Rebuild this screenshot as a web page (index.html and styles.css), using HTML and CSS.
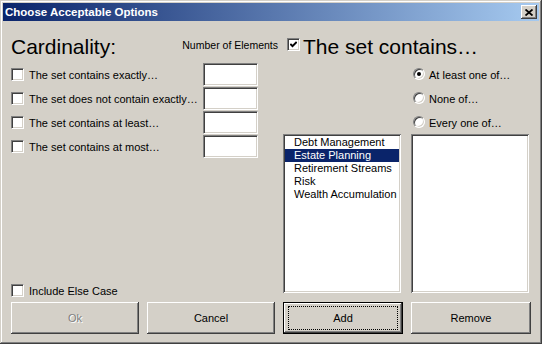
FILE: index.html
```html
<!DOCTYPE html>
<html lang="en">
<head>
  <meta charset="UTF-8">
  <title>Choose Acceptable Options</title>
  <link rel="stylesheet" href="styles.css">
</head>
<body>

  <div class="window">
    <div class="titlebar">
      <span class="title">Choose Acceptable Options</span>
      <span class="close">
        <svg width="8" height="7" viewBox="0 0 8 7">
          <path d="M0.5 0.5 L7.5 6.5 M7.5 0.5 L0.5 6.5" stroke="#000" stroke-width="1.8" fill="none"/>
        </svg>
      </span>
    </div>

    <div class="dialog">
      <div class="main">
        <!-- cardinality -->
        <div class="left">
          <div class="head">
            <span class="big">Cardinality:</span>
            <span class="small">Number of Elements</span>
          </div>
          <div class="opt-row"><span class="check"></span><span class="label">The set contains exactly…</span><span class="textbox"></span></div>
          <div class="opt-row"><span class="check"></span><span class="label">The set does not contain exactly…</span><span class="textbox"></span></div>
          <div class="opt-row"><span class="check"></span><span class="label">The set contains at least…</span><span class="textbox"></span></div>
          <div class="opt-row"><span class="check"></span><span class="label">The set contains at most…</span><span class="textbox"></span></div>
          <div class="else-row"><span class="check"></span><span class="label">Include Else Case</span></div>
        </div>

        <!-- membership -->
        <div class="right">
          <div class="head">
            <span class="check checked">
              <svg width="7" height="7" viewBox="0 0 7 7">
                <polyline points="0.3,3 2.5,5.2 6.7,1" stroke="#000" stroke-width="2" fill="none"/>
              </svg>
            </span>
            <span class="big">The set contains…</span>
          </div>
          <div class="radios">
            <div class="radio-row"><span class="radio on"></span><span class="label">At least one of…</span></div>
            <div class="radio-row"><span class="radio"></span><span class="label">None of…</span></div>
            <div class="radio-row"><span class="radio"></span><span class="label">Every one of…</span></div>
          </div>
          <div class="lists">
            <ul class="listbox">
              <li>Debt Management</li>
              <li class="selected">Estate Planning</li>
              <li>Retirement Streams</li>
              <li>Risk</li>
              <li>Wealth Accumulation</li>
            </ul>
            <ul class="listbox"></ul>
          </div>
        </div>
      </div>

      <div class="buttons">
        <div class="btn disabled">Ok</div>
        <div class="btn">Cancel</div>
        <div class="btn default"><span class="focus">Add</span></div>
        <div class="btn">Remove</div>
      </div>
    </div>
  </div>

</body>
</html>
```

FILE: styles.css
```css
:root {
  --face: #d4d0c8;
  --shadow: #808080;
  --dark: #404040;
  --font: "Liberation Sans", Arial, sans-serif;
}

body {
  margin: 0;
  font-family: var(--font);
  font-size: 11px;
  color: #000;
  background: var(--face);
}

.window {
  width: 542px;
  height: 344px;
  box-sizing: border-box;
  padding: 3px;
  background: var(--face);
  box-shadow: inset -1px -1px var(--dark), inset 1px 1px var(--face),
              inset -2px -2px var(--shadow), inset 2px 2px #fff;
  display: flex;
  flex-direction: column;
}

.titlebar {
  height: 18px;
  display: flex;
  align-items: center;
  padding-left: 2px;
  background: linear-gradient(to right, #0a246a, #a6caf0);
}

.title {
  color: #fff;
  font-weight: bold;
  font-size: 11.5px;
}

.close {
  margin-left: auto;
  margin-right: 2px;
  width: 16px;
  height: 14px;
  display: flex;
  justify-content: center;
  align-items: center;
  background: var(--face);
  box-shadow: inset -1px -1px var(--dark), inset 1px 1px #fff,
              inset -2px -2px var(--shadow), inset 2px 2px var(--face);
}

.dialog {
  flex: 1;
  display: flex;
  flex-direction: column;
  padding: 15px 8px 7px;
}

.main {
  flex: 1;
  display: flex;
  gap: 8px;
}

.left {
  width: 264px;
  display: flex;
  flex-direction: column;
}

.right {
  width: 248px;
  display: flex;
  flex-direction: column;
}

.head {
  height: 22px;
  display: flex;
  margin-bottom: 4px;
}

.left .head {
  justify-content: space-between;
}

.right .head {
  align-items: flex-start;
}

.big {
  font-size: 21px;
  line-height: 22px;
}

.small {
  font-size: 10.5px;
  line-height: 13px;
  margin-top: 3px;
  margin-right: -3px;
}

/* sunken controls */
.check,
.textbox,
.listbox {
  box-sizing: border-box;
  background: #fff;
  border: 1px solid;
  border-color: var(--shadow) #fff #fff var(--shadow);
  box-shadow: inset 1px 1px var(--dark), inset -1px -1px var(--face);
}

.check {
  width: 13px;
  height: 13px;
  flex: none;
  display: flex;
  justify-content: center;
  align-items: center;
}

.right .head .check {
  margin: 2px 3px 0 4px;
}

.opt-row,
.radio-row {
  height: 24px;
  display: flex;
  align-items: center;
}

.label {
  padding-top: 2px;
  margin-left: 5px;
  line-height: 13px;
  white-space: nowrap;
}

.opt-row .label {
  flex: 1;
}

.textbox {
  width: 55px;
  height: 23px;
  margin-right: 17px;
}

.else-row {
  margin-top: auto;
  margin-bottom: 1px;
  height: 13px;
  display: flex;
  align-items: center;
}

.radios {
  margin-left: 130px;
}

.radio {
  width: 12px;
  height: 12px;
  box-sizing: border-box;
  border-radius: 50%;
  background: #fff;
  border: 1px solid;
  border-color: var(--shadow) #fff #fff var(--shadow);
  box-shadow: inset 1px 1px var(--dark), inset -1px -1px var(--face);
  display: flex;
  justify-content: center;
  align-items: center;
}

.radio.on::after {
  content: "";
  width: 4px;
  height: 4px;
  border-radius: 50%;
  background: #000;
}

.radio-row .label {
  margin-left: 4px;
}

.lists {
  display: flex;
  gap: 10px;
}

.listbox {
  width: 118px;
  height: 159px;
  margin: 0;
  padding: 2px 2px;
  list-style: none;
  border-width: 0;
  box-shadow: inset 1px 1px var(--shadow), inset -1px -1px #fff,
              inset 2px 2px var(--dark), inset -2px -2px var(--face);
}

.listbox li {
  height: 13px;
  line-height: 13px;
  padding-left: 9px;
  white-space: nowrap;
}

.listbox .selected {
  background: #0a246a;
  color: #fff;
}

.buttons {
  margin-top: 4px;
  height: 32px;
  display: grid;
  grid-template-columns: 128px 128px 120px 120px;
  gap: 8px;
}

.btn {
  display: flex;
  justify-content: center;
  align-items: center;
  background: var(--face);
  box-shadow: inset -1px -1px var(--dark), inset 1px 1px #fff,
              inset -2px -2px var(--shadow), inset 2px 2px var(--face);
}

.btn.disabled {
  color: var(--shadow);
  text-shadow: 1px 1px #fff;
}

.btn.default {
  box-shadow: inset 0 0 0 1px #000, inset -2px -2px var(--dark), inset 2px 2px #fff,
              inset -3px -3px var(--shadow);
  padding: 4px 5px;
}

.btn .focus {
  flex: 1;
  align-self: stretch;
  display: flex;
  justify-content: center;
  align-items: center;
  border: 1px dotted #000;
}
```
